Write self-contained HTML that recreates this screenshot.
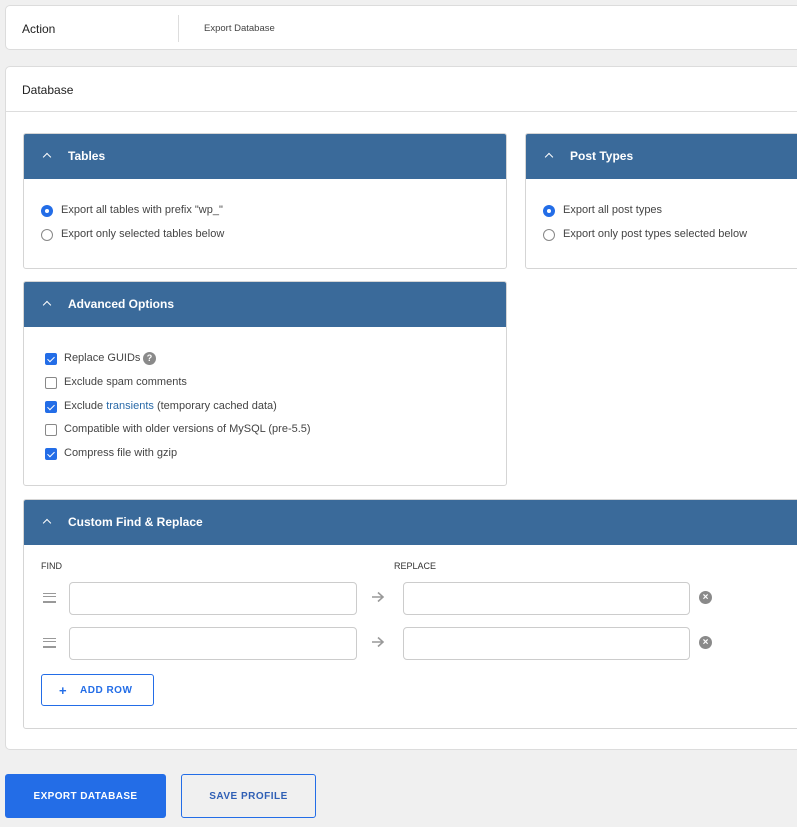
<!DOCTYPE html>
<html><head><style>
*{box-sizing:border-box;margin:0;padding:0}
body{width:797px;height:827px;background:#f0f0f0;font-family:"Liberation Sans",sans-serif;position:relative;overflow:hidden;color:#333}
.a{position:absolute}
.card{position:absolute;background:#fff;border:1px solid #dcdcdc;border-radius:5px}
.pan{position:absolute;background:#fff;border:1px solid #d5d5d5;border-radius:3px;overflow:hidden}
.hd{height:45px;background:#3a6a9a;color:#fff;font-weight:bold;font-size:12px;line-height:44px;padding-left:44px;position:relative}
.hd:before{content:"";position:absolute;left:20px;top:20px;width:5px;height:5px;border-left:1.5px solid #fff;border-top:1.5px solid #fff;transform:rotate(45deg)}
.t{position:absolute;font-size:11px;color:#444;white-space:nowrap}
.r{position:absolute;width:12px;height:12px;border-radius:50%;border:1px solid #888;background:#fff}
.r.on{border:none;background:#236de7}
.r.on:after{content:"";position:absolute;left:4px;top:4px;width:4px;height:4px;border-radius:50%;background:#fff}
.c{position:absolute;width:12px;height:12px;border-radius:2px;border:1px solid #888;background:#fff}
.c.on{border:none;background:#236de7}
.c.on:after{content:"";position:absolute;left:4px;top:1.5px;width:3px;height:6px;border-right:1.6px solid #fff;border-bottom:1.6px solid #fff;transform:rotate(45deg)}
.in{position:absolute;height:33px;border:1px solid #ccc;border-radius:4px;background:#fff}
.dr{position:absolute;width:13px;height:10px;border-top:1px solid #999;border-bottom:1px solid #999}
.dr:after{content:"";position:absolute;left:0;right:0;top:2px;height:4px;border-top:1px solid #999;border-bottom:1px solid #999}
.x{position:absolute;width:13px;height:13px;border-radius:50%;background:#8a8a8a;color:#fff;font-size:10px;line-height:13px;text-align:center;font-weight:bold}
.ar{position:absolute}
</style></head><body>
<div class="card" style="left:5px;top:5px;width:800px;height:45px">
<div class="t" style="left:16px;top:16px;font-size:12px;color:#222">Action</div>
<div class="a" style="left:172px;top:9px;width:1px;height:27px;background:#ddd"></div>
<div class="t" style="left:198px;top:17px;font-size:9.5px">Export Database</div>
</div>
<div class="card" style="left:5px;top:66px;width:800px;height:684px">
<div class="t" style="left:16px;top:16px;font-size:12px;color:#222">Database</div>
<div class="a" style="left:0;top:44px;width:100%;height:1px;background:#ddd"></div>
</div>
<div class="pan" style="left:23px;top:133px;width:484px;height:136px"><div class="hd">Tables</div>
<div class="r on" style="left:17px;top:71px"></div><div class="t" style="left:37px;top:70px">Export all tables with prefix "wp_"</div>
<div class="r" style="left:17px;top:95px"></div><div class="t" style="left:37px;top:94px">Export only selected tables below</div></div>
<div class="pan" style="left:525px;top:133px;width:290px;height:136px"><div class="hd">Post Types</div>
<div class="r on" style="left:17px;top:71px"></div><div class="t" style="left:37px;top:70px">Export all post types</div>
<div class="r" style="left:17px;top:95px"></div><div class="t" style="left:37px;top:94px">Export only post types selected below</div></div>
<div class="pan" style="left:23px;top:281px;width:484px;height:205px"><div class="hd">Advanced Options</div>
<div class="c on" style="left:21px;top:71px"></div><div class="t" style="left:40px;top:70px">Replace GUIDs</div><div class="x" style="left:119px;top:70px;font-size:9px">?</div>
<div class="c" style="left:21px;top:95px"></div><div class="t" style="left:40px;top:94px">Exclude spam comments</div>
<div class="c on" style="left:21px;top:119px"></div><div class="t" style="left:40px;top:118px">Exclude <span style="color:#2a6aa8">transients</span> (temporary cached data)</div>
<div class="c" style="left:21px;top:142px"></div><div class="t" style="left:40px;top:141px">Compatible with older versions of MySQL (pre-5.5)</div>
<div class="c on" style="left:21px;top:166px"></div><div class="t" style="left:40px;top:165px">Compress file with gzip</div></div>
<div class="pan" style="left:23px;top:499px;width:790px;height:230px"><div class="hd">Custom Find &amp; Replace</div></div>
<div class="t" style="left:41px;top:561px;font-size:9px;color:#333">FIND</div>
<div class="t" style="left:394px;top:561px;font-size:9px;color:#333">REPLACE</div>
<div class="dr" style="left:43px;top:593px"></div><div class="in" style="left:69px;top:582px;width:288px"></div>
<svg class="ar" style="left:371px;top:591px" width="14" height="12"><path d="M1 6H12M7 1.5L12 6L7 10.5" stroke="#999" stroke-width="1.6" fill="none"/></svg>
<div class="in" style="left:403px;top:582px;width:287px"></div><div class="x" style="left:699px;top:591px">×</div>
<div class="dr" style="left:43px;top:638px"></div><div class="in" style="left:69px;top:627px;width:288px"></div>
<svg class="ar" style="left:371px;top:636px" width="14" height="12"><path d="M1 6H12M7 1.5L12 6L7 10.5" stroke="#999" stroke-width="1.6" fill="none"/></svg>
<div class="in" style="left:403px;top:627px;width:287px"></div><div class="x" style="left:699px;top:636px">×</div>
<div class="a" style="left:41px;top:674px;width:113px;height:32px;border:1px solid #236de7;border-radius:3px;color:#236de7;font-size:10px;font-weight:bold;line-height:32px;letter-spacing:.5px"><span style="position:absolute;left:17px;font-size:13px">+</span><span style="position:absolute;left:38px">ADD ROW</span></div>
<div class="a" style="left:5px;top:774px;width:161px;height:44px;background:#236de7;border-radius:3px;color:#fff;font-size:10px;font-weight:bold;line-height:46px;text-align:center;letter-spacing:.4px">EXPORT DATABASE</div>
<div class="a" style="left:181px;top:774px;width:135px;height:44px;border:1px solid #236de7;border-radius:3px;color:#2f5fb5;font-size:10px;font-weight:bold;line-height:44px;text-align:center;letter-spacing:.5px">SAVE PROFILE</div>
</body></html>
